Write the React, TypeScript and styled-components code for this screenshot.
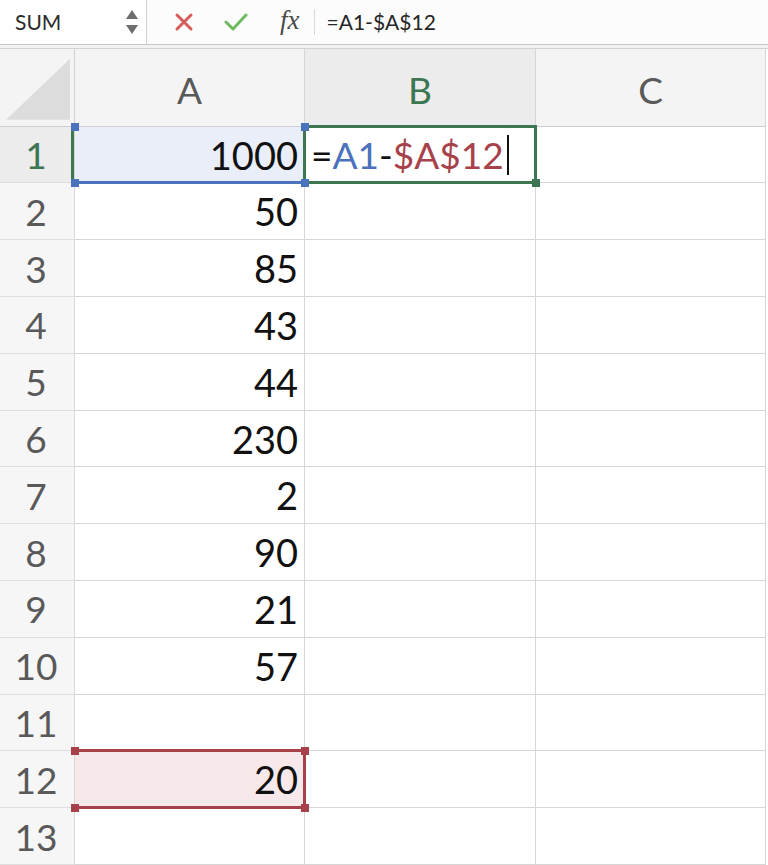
import React from "react";
import styled, { createGlobalStyle } from "styled-components";

const GlobalStyle = createGlobalStyle`
  html, body {
    margin: 0;
    padding: 0;
    background: #ffffff;
  }
  body {
    font-family: Lato, "Open Sans", "Liberation Sans", sans-serif;
    overflow: hidden;
  }
`;

const GREEN = "#3c7752";
const BLUE = "#4a72bd";
const RED = "#a7414a";
const ROW_H = 56.8;

const Page = styled.div`
  width: 768px;
  height: 865px;
  display: flex;
  flex-direction: column;
  overflow: hidden;
`;

const FormulaBar = styled.div`
  height: 45px;
  display: flex;
  align-items: center;
  background: #fcfcfc;
  border-bottom: 1px solid #c6c6c6;
`;

const NameBox = styled.div`
  width: 147px;
  height: 100%;
  display: flex;
  align-items: center;
  justify-content: space-between;
  padding: 0 8px 0 15px;
  box-sizing: border-box;
  border-right: 1px solid #d0d0d0;
  background: #ffffff;
  font-size: 21px;
  color: #2b2b2b;
`;

const Spinner = styled.div`
  display: flex;
  flex-direction: column;
  gap: 6px;
`;

const Arrow = styled.span<{ $down?: boolean }>`
  width: 0;
  height: 0;
  border-left: 6px solid transparent;
  border-right: 6px solid transparent;
  ${(p) =>
    p.$down
      ? "border-top: 9px solid #6d6d6d;"
      : "border-bottom: 9px solid #6d6d6d;"}
`;

const Tools = styled.div`
  display: flex;
  align-items: center;
  gap: 30px;
  padding-left: 27px;
  padding-right: 14px;
`;

const Fx = styled.span`
  font-family: "Liberation Serif", "DejaVu Serif", serif;
  font-style: italic;
  font-size: 27px;
  color: #4a4a4a;
  margin-left: 2px;
  margin-top: -3px;
`;

const Divider = styled.div`
  width: 1px;
  height: 26px;
  background: #d8d8d8;
`;

const FormulaText = styled.div`
  padding-left: 12px;
  font-size: 21px;
  color: #262626;
`;

const Strip = styled.div`
  height: 3px;
  background: #f2f2f2;
  border-bottom: 1px solid #d2d2d2;
`;

const Grid = styled.div`
  display: grid;
  grid-template-columns: 75px 230px 231px 230px;
  grid-template-rows: 78px repeat(13, ${ROW_H}px);
`;

const Cell = styled.div<{ $fill?: string }>`
  position: relative;
  box-sizing: border-box;
  border-right: 1px solid #d6d6d6;
  border-bottom: 1px solid #d6d6d6;
  background: ${(p) => p.$fill || "#ffffff"};
  display: flex;
  align-items: center;
  justify-content: flex-end;
  padding-right: 6px;
  font-size: 38px;
  color: #111111;
`;

const ColHead = styled.div<{ $active?: boolean }>`
  box-sizing: border-box;
  border-right: 1px solid #d6d6d6;
  border-bottom: 1px solid #cfcfcf;
  background: ${(p) => (p.$active ? "#ececec" : "#f4f4f4")};
  color: ${(p) => (p.$active ? GREEN : "#595959")};
  display: flex;
  align-items: center;
  justify-content: center;
  font-size: 37px;
  padding-top: 4px;
`;

const RowHead = styled.div<{ $active?: boolean }>`
  position: relative;
  box-sizing: border-box;
  border-right: 1px solid #d6d6d6;
  border-bottom: 1px solid #dedede;
  background: ${(p) => (p.$active ? "#ececec" : "#f6f6f6")};
  color: ${(p) => (p.$active ? GREEN : "#595959")};
  display: flex;
  align-items: center;
  justify-content: center;
  font-size: 37px;
  padding-right: 2px;
  ${(p) => (p.$active ? `box-shadow: inset -3px 0 0 ${GREEN};` : "")}
`;

const Corner = styled.div`
  box-sizing: border-box;
  border-right: 1px solid #cfcfcf;
  border-bottom: 1px solid #cfcfcf;
  background: #f4f4f4;
  padding: 10px 4px 6px 6px;
  display: flex;
`;

const CornerShape = styled.div`
  flex: 1;
  background: #dcdcdc;
  clip-path: polygon(100% 0, 100% 100%, 0 100%);
`;

/* selection and range-reference outlines drawn over the cells */
const Outline = styled.div<{ $color: string; $sides: string }>`
  position: absolute;
  z-index: 2;
  left: -2px;
  top: -2px;
  right: -2px;
  bottom: -2px;
  pointer-events: none;
  ${(p) => (p.$sides.includes("t") ? `border-top: 3px solid ${p.$color};` : "")}
  ${(p) => (p.$sides.includes("b") ? `border-bottom: 3px solid ${p.$color};` : "")}
  ${(p) => (p.$sides.includes("l") ? `border-left: 3px solid ${p.$color};` : "")}
  ${(p) => (p.$sides.includes("r") ? `border-right: 3px solid ${p.$color};` : "")}
`;

const Handle = styled.span<{ $color: string; $x: "l" | "r"; $y: "t" | "b" }>`
  position: absolute;
  z-index: 3;
  width: 8px;
  height: 8px;
  background: ${(p) => p.$color};
  ${(p) => (p.$x === "l" ? "left: -4px;" : "right: -5px;")}
  ${(p) => (p.$y === "t" ? "top: -4px;" : "bottom: -5px;")}
`;

const Editor = styled.div`
  flex: 1;
  display: flex;
  align-items: center;
  padding-left: 6px;
  font-size: 37px;
  color: #111111;
`;

const Ref = styled.span<{ $color: string }>`
  color: ${(p) => p.$color};
`;

const Caret = styled.span`
  display: inline-block;
  width: 2px;
  height: 40px;
  background: #111111;
  margin-left: 3px;
`;

const values: (number | null)[] = [1000, 50, 85, 43, 44, 230, 2, 90, 21, 57, null, 20, null];

const Corners: React.FC<{ color: string }> = ({ color }) => (
  <>
    <Handle $color={color} $x="l" $y="t" />
    <Handle $color={color} $x="r" $y="t" />
    <Handle $color={color} $x="l" $y="b" />
    <Handle $color={color} $x="r" $y="b" />
  </>
);

const CrossIcon = () => (
  <svg width="20" height="20" viewBox="0 0 20 20">
    <path d="M3 3 L17 17 M17 3 L3 17" stroke="#d65b5b" strokeWidth="3" strokeLinecap="round" />
  </svg>
);

const CheckIcon = () => (
  <svg width="24" height="20" viewBox="0 0 24 20">
    <path d="M2 10 L9 17 L22 3" fill="none" stroke="#6dbb5e" strokeWidth="3" strokeLinecap="round" strokeLinejoin="round" />
  </svg>
);

export default function App() {
  return (
    <Page>
      <GlobalStyle />
      <FormulaBar>
        <NameBox>
          SUM
          <Spinner>
            <Arrow />
            <Arrow $down />
          </Spinner>
        </NameBox>
        <Tools>
          <CrossIcon />
          <CheckIcon />
          <Fx>fx</Fx>
        </Tools>
        <Divider />
        <FormulaText>=A1-$A$12</FormulaText>
      </FormulaBar>
      <Strip />
      <Grid>
        <Corner>
          <CornerShape />
        </Corner>
        <ColHead>A</ColHead>
        <ColHead $active>B</ColHead>
        <ColHead>C</ColHead>
        {values.map((v, i) => {
          const row = i + 1;
          return (
            <React.Fragment key={row}>
              <RowHead $active={row === 1}>{row}</RowHead>
              {row === 1 ? (
                <Cell $fill="#e9eef8">
                  {v}
                  <Outline $color={BLUE} $sides="b" />
                  <Corners color={BLUE} />
                </Cell>
              ) : row === 12 ? (
                <Cell $fill="#f7e9e9">
                  {v}
                  <Outline $color={RED} $sides="tbr" />
                  <Corners color={RED} />
                </Cell>
              ) : (
                <Cell>{v}</Cell>
              )}
              {row === 1 ? (
                <Cell>
                  <Editor>
                    =<Ref $color={BLUE}>A1</Ref>-<Ref $color={RED}>$A$12</Ref>
                    <Caret />
                  </Editor>
                  <Outline $color={GREEN} $sides="tblr" />
                  <Handle $color={GREEN} $x="r" $y="b" />
                </Cell>
              ) : (
                <Cell />
              )}
              <Cell />
            </React.Fragment>
          );
        })}
      </Grid>
    </Page>
  );
}
